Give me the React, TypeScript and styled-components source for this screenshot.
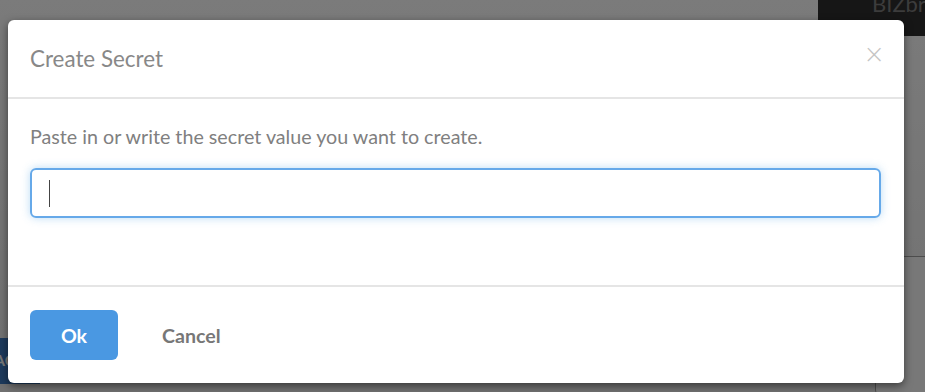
import React from 'react';
import styled, { createGlobalStyle } from 'styled-components';

const GlobalStyle = createGlobalStyle`
	html, body {
		margin: 0;
		padding: 0;
		background: #7a7a7a;
	}
	* {
		box-sizing: border-box;
	}
`;

const Page = styled.div`
	position: relative;
	width: 925px;
	height: 392px;
	overflow: hidden;
	font-family: Lato, 'Open Sans', sans-serif;
	background: linear-gradient(#f6f6f6, #e2e2e2);
`;

const TopBar = styled.div`
	display: flex;
	justify-content: flex-end;
	height: 36px;
`;

const Brand = styled.div`
	width: 107px;
	height: 36px;
	background: #2c2c2c;
	color: #787878;
	font-size: 22px;
	font-weight: 400;
	line-height: 22px;
	padding-left: 54px;
	white-space: nowrap;
	overflow: hidden;

	span {
		display: block;
		margin-top: -7px;
	}
`;

const SideCard = styled.div`
	position: absolute;
	right: -10px;
	top: 256px;
	width: 60px;
	height: 140px;
	border: 1px solid #9a9a9a;
	border-radius: 6px;
	background: #f0f0f0;
`;

const BottomStrip = styled.div`
	position: absolute;
	left: 0;
	top: 338px;
	width: 40px;
	height: 46px;
	background: #3a74b8;
	color: #f0f0f0;
	font-size: 16px;
	font-weight: 700;
	padding: 12px 0 0 0;
	text-indent: -6px;
`;

const Overlay = styled.div`
	position: absolute;
	inset: 0;
	background: rgba(0, 0, 0, 0.5);
	padding: 20px 0 0 8px;
`;

const Modal = styled.div`
	width: 896px;
	height: 363px;
	background: #fff;
	border-radius: 6px;
	box-shadow: 0 3px 9px rgba(0, 0, 0, 0.5);
	display: flex;
	flex-direction: column;
`;

const Header = styled.div`
	display: flex;
	align-items: center;
	justify-content: space-between;
	height: 79px;
	padding: 0 22px 0 22px;
	border-bottom: 2px solid #e5e5e5;
`;

const Title = styled.h4`
	margin: 0;
	font-size: 22.4px;
	font-weight: 400;
	color: #888;
`;

const Close = styled.button`
	border: 0;
	background: none;
	padding: 0;
	margin-right: -3px;
	margin-top: -9px;
	color: #c4c4c4;
	font-family: 'DejaVu Sans', sans-serif;
	font-size: 26px;
	font-weight: 300;
	line-height: 1;
	cursor: pointer;
`;

const Body = styled.div`
	height: 188px;
	padding: 26px 22px 0 22px;
	border-bottom: 2px solid #e5e5e5;
`;

const Hint = styled.p`
	margin: 0 0 19px 0;
	font-size: 19.7px;
	line-height: 24px;
	color: #808080;
`;

const Field = styled.div`
	display: flex;
	align-items: center;
	width: 851px;
	height: 50px;
	padding-left: 17px;
	border: 2px solid #66a9e9;
	border-radius: 6px;
	box-shadow: 0 0 8px rgba(102, 175, 233, 0.45);
`;

const Caret = styled.span`
	width: 1px;
	height: 27px;
	background: #444;
`;

const Footer = styled.div`
	display: flex;
	align-items: flex-start;
	padding: 23px 22px 0 22px;
`;

const Button = styled.button<{ $primary?: boolean }>`
	height: 50px;
	min-width: 88px;
	padding: 0 22px;
	border: 0;
	border-radius: 6px;
	font-family: Lato, 'Open Sans', sans-serif;
	font-size: 19.6px;
	font-weight: 700;
	cursor: pointer;
	background: ${({ $primary }) => ($primary ? '#4a98e2' : 'transparent')};
	color: ${({ $primary }) => ($primary ? '#fff' : '#777')};
	margin-left: ${({ $primary }) => ($primary ? '0' : '22px')};
`;

export default function App() {
	return (
		<Page>
			<GlobalStyle />
			<TopBar>
				<Brand>
					<span>BIZbrain</span>
				</Brand>
			</TopBar>
			<SideCard />
			<BottomStrip>ACC</BottomStrip>
			<Overlay>
				<Modal>
					<Header>
						<Title>Create Secret</Title>
						<Close aria-label="Close">×</Close>
					</Header>
					<Body>
						<Hint>Paste in or write the secret value you want to create.</Hint>
						<Field>
							<Caret />
						</Field>
					</Body>
					<Footer>
						<Button $primary>Ok</Button>
						<Button>Cancel</Button>
					</Footer>
				</Modal>
			</Overlay>
		</Page>
	);
}
